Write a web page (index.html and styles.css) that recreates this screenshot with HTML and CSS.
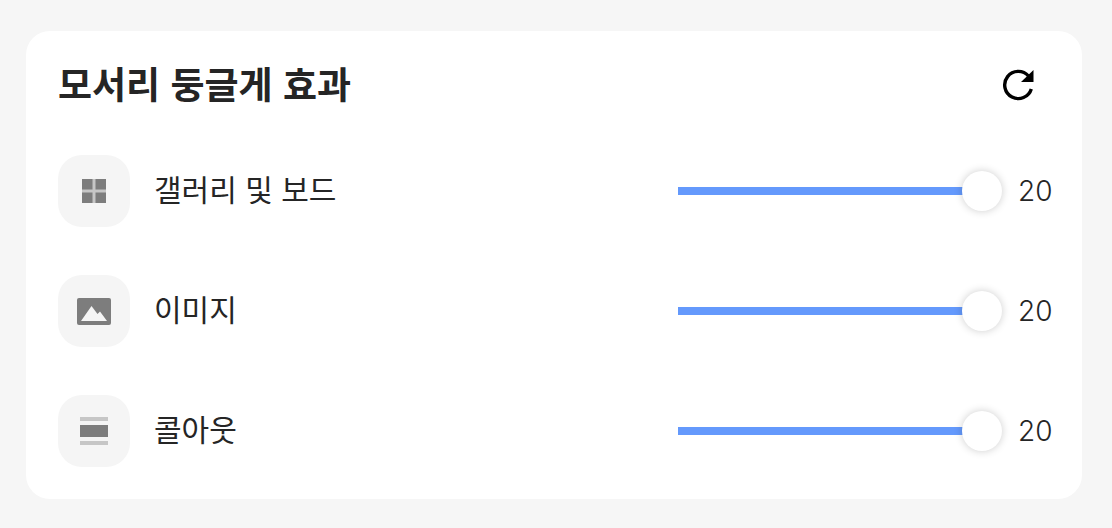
FILE: index.html
```html
<!DOCTYPE html>
<html lang="ko">
<head>
  <meta charset="UTF-8">
  <meta name="viewport" content="width=device-width, initial-scale=1.0">
  <title>모서리 둥글게 효과</title>
  <link rel="stylesheet" href="styles.css">
</head>
<body>
  <section class="card">
    <header class="card-header">
      <h1>모서리 둥글게 효과</h1>
      <button class="reset" type="button" aria-label="초기화">
        <svg width="32" height="32" viewBox="0 0 32 32">
          <path d="M26.500 7A13.600 13.600 0 1 0 29.300 20" fill="none" stroke="#000" stroke-width="3.400"/>
          <path d="M31.500 1v12H19z" fill="#000"/>
        </svg>
      </button>
    </header>

    <div class="row">
      <span class="icon">
        <svg width="36" height="36" viewBox="0 0 36 36">
          <path fill="#c6c6c6" d="M6 6h24v24H6z"/>
          <path fill="#7d7d7d" d="M6 6h10.500v10.500H6zM19.500 6H30v10.500H19.500zM6 19.500h10.500V30H6zM19.500 19.500H30V30H19.500z"/>
        </svg>
      </span>
      <label for="gallery">갤러리 및 보드</label>
      <input id="gallery" type="range" min="0" max="20" value="20">
      <output for="gallery">20</output>
    </div>

    <div class="row">
      <span class="icon">
        <svg width="36" height="36" viewBox="0 0 36 36">
          <rect x="1" y="5" width="34" height="27" rx="2" fill="#7d7d7d"/>
          <path fill="#f5f5f5" d="M5 28L15.500 13L21.500 21L24 18.500L31 28z"/>
        </svg>
      </span>
      <label for="image">이미지</label>
      <input id="image" type="range" min="0" max="20" value="20">
      <output for="image">20</output>
    </div>

    <div class="row">
      <span class="icon">
        <svg width="36" height="36" viewBox="0 0 36 36">
          <path fill="#c6c6c6" d="M4 4h28v4H4zM4 28h28v4H4z"/>
          <path fill="#7d7d7d" d="M4 12h28v12H4z"/>
        </svg>
      </span>
      <label for="callout">콜아웃</label>
      <input id="callout" type="range" min="0" max="20" value="20">
      <output for="callout">20</output>
    </div>
  </section>

  <script>
    document.querySelectorAll('.row input').forEach(input => {
      const output = input.nextElementSibling;
      const update = () => {
        output.textContent = input.value;
        input.style.setProperty('--fill', (input.value / input.max * 100) + '%');
      };
      input.addEventListener('input', update);
      document.querySelector('.reset').addEventListener('click', () => {
        input.value = input.defaultValue;
        update();
      });
    });
  </script>
</body>
</html>
```

FILE: styles.css
```css
* {
  box-sizing: border-box;
}
body {
  margin: 0;
  padding: 31px 30px 29px 26px;
  background: #f6f6f6;
  color: #252525;
  font-family: "Noto Sans CJK KR", sans-serif;
}
.card {
  display: flex;
  flex-direction: column;
  gap: 48px;
  padding: 32px 30px 32px 32px;
  background: #fff;
  border-radius: 24px;
}
.card-header {
  display: flex;
  align-items: center;
  justify-content: space-between;
  height: 44px;
}
h1 {
  margin: 0;
  padding-bottom: 4px;
  font-size: 37px;
  font-weight: 700;
  line-height: 40px;
}
.reset {
  display: flex;
  align-items: center;
  justify-content: center;
  width: 68px;
  height: 44px;
  padding: 0;
  border: none;
  background: none;
  cursor: pointer;
}
.row {
  display: flex;
  align-items: center;
}
.icon {
  display: flex;
  align-items: center;
  justify-content: center;
  width: 72px;
  height: 72px;
  margin-right: 24px;
  background: #f5f5f5;
  border-radius: 24px;
}
.row label {
  flex: 1;
  padding-bottom: 6px;
  font-size: 30px;
  font-weight: 400;
  line-height: 40px;
}
.row output {
  width: 34px;
  margin-left: 16px;
  font-family: Inter, sans-serif;
  font-size: 28px;
  font-weight: 300;
  line-height: 40px;
}
input[type="range"] {
  --fill: 100%;
  appearance: none;
  -webkit-appearance: none;
  width: 324px;
  height: 40px;
  margin: 0;
  background: none;
  cursor: pointer;
}
input[type="range"]::-webkit-slider-runnable-track {
  height: 8px;
  background: linear-gradient(to right, #6499fc calc(var(--fill) - 8px), transparent calc(var(--fill) - 8px));
}
input[type="range"]::-webkit-slider-thumb {
  -webkit-appearance: none;
  width: 40px;
  height: 40px;
  margin-top: -16px;
  border: none;
  border-radius: 50%;
  background: #fff;
  box-shadow: 0 0 8px rgba(0, 0, 0, 0.2);
}
```
